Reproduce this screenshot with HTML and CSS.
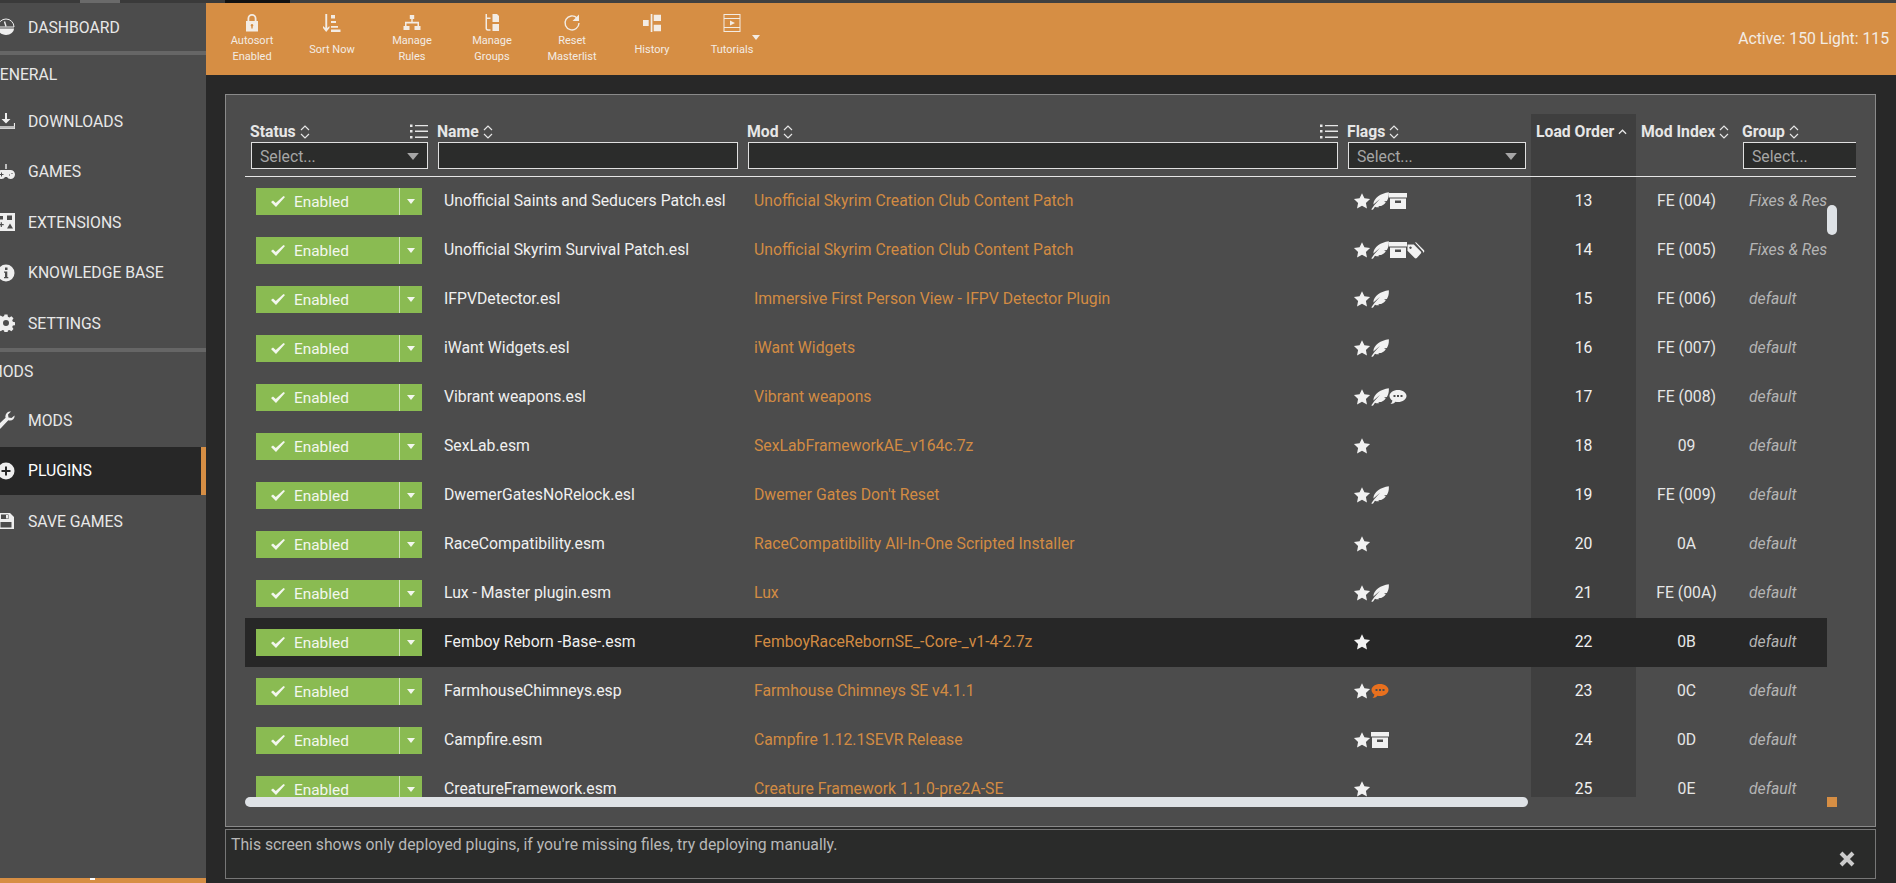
FILE: index.html
```html
<!DOCTYPE html>
<html lang="en">
<head>
    <meta charset="UTF-8">
    <meta name="viewport" content="width=device-width, initial-scale=1.0">
    <title>Plugins</title>
    <link rel="stylesheet" href="styles.css">
</head>
<body>
    <svg class="defs" width="0" height="0">
        <symbol id="star" viewBox="-.5 -.5 17 17"><path d="M8 .6l2.300 4.900 5.300.7-3.900 3.700 1 5.300L8 12.600l-4.700 2.600 1-5.300L.4 6.200l5.300-.7z"/></symbol>
        <symbol id="feather" viewBox="0 0 18 18"><path d="M17.800 .2c.3 3.200-.3 6.300-1.900 8.800l-3 .4 1.900.9c-1.100 1.700-2.700 3-4.700 3.700l-3.100-.1 1.500 1c-1.600.5-3.200.4-4.500-.2L1.900 17.800.2 17.400l3.200-4.300 5.700-6.400-6.700 5.700C2.400 5.800 10 1.200 17.800 .2z"/></symbol>
        <symbol id="box" viewBox="0 0 18 18"><path d="M0 1h18v4.500H0zM1 6.500h16V17H1zM6 8.500V11h6V8.500z" fill-rule="evenodd"/></symbol>
        <symbol id="tags" viewBox="0 0 18 18"><path d="M.5 3.500h6.300l7 7c.6.6.6 1.500 0 2.100l-4 4.400c-.6.6-1.500.6-2.100 0l-7.200-7.200zM3.500 5.500a1.200 1.200 0 1 0 .01 0z" fill-rule="evenodd"/><path d="M8 1.500l1-.3 7.800 7.800c.7.7.7 1.600 0 2.300l-.7.700c.3-.7.200-1.300-.3-1.800z"/></symbol>
        <symbol id="talk" viewBox="0 0 18 18"><path d="M9 2c4.700 0 8.500 2.700 8.500 6S13.700 14 9 14c-.9 0-1.700-.1-2.500-.3C5.200 15 3.500 16 1.500 16c1-.9 1.700-2 1.900-3.400C1.700 11.500.5 9.800.5 8 .5 4.700 4.300 2 9 2zM4.500 7v2h2V7zM8 7v2h2V7zM11.500 7v2h2V7z" fill-rule="evenodd"/></symbol>
        <symbol id="check" viewBox="0 0 14 11"><path d="M0 6l2-1.400 2.800 2.400L12.500 0 14 1 5 11z"/></symbol>
        <symbol id="caret" viewBox="0 0 10 6"><path d="M0 0h10L5 6z"/></symbol>
        <symbol id="updown" viewBox="0 0 10 14"><path d="M1 5l4-4 4 4M1 9l4 4 4-4" fill="none" stroke="currentColor" stroke-width="1.200"/></symbol>
        <symbol id="listicon" viewBox="0 0 18 15"><path d="M0 .5h2.500v2.500H0zM0 6h2.500v2.500H0zM0 12h2.500v2.500H0zM5 1h13v1.300H5zM5 6.600h13v1.300H5zM5 12.600h13v1.300H5z"/></symbol>
    </svg>

    <div class="topstrip"></div>

    <div class="app">
        <aside class="sidebar">
            <nav class="nav">
                <a class="nav-item nav-item--flush">
                    <svg class="nav-icon" viewBox="0 0 18 18"><path d="M9 1a8 8 0 0 1 8 8H1a8 8 0 0 1 8-8z" fill="none" stroke="#eee" stroke-width="1"/><path d="M1 10.500h16c0 3.500-3.500 6.500-8 6.500s-8-3-8-6.500z"/><path d="M9 8.500l-1.500-5" stroke="#eee" stroke-width="1.400"/></svg>
                    DASHBOARD
                </a>
                <div class="nav-rule"></div>
                <p class="nav-label">GENERAL</p>
                <a class="nav-item">
                    <svg class="nav-icon" viewBox="0 0 18 18"><path d="M8 1h2v6h3.500L9 11.500 4.500 7H8z"/><path d="M.5 11v5.500h17V11" fill="none" stroke="#eee" stroke-width="1.200"/><path d="M.5 14h17v2.500H.5z" fill="#bbb"/></svg>
                    DOWNLOADS
                </a>
                <a class="nav-item">
                    <svg class="nav-icon" viewBox="0 0 18 18"><path d="M8.300 1h1.400v5h-1.400z"/><path d="M4.500 7h9c2.500 0 4.500 2 4.500 4.500S16 16 13.500 16c-1.600 0-2.800-.9-3.500-2H8c-.7 1.100-1.900 2-3.500 2C2 16 0 14 0 11.500S2 7 4.500 7z"/><path d="M2.500 11h4v1h-4zM4 9.500h1v4H4zM12 11.500h1v1h-1zM14.500 10h1v1h-1z" fill="#4c4c4c"/></svg>
                    GAMES
                </a>
                <a class="nav-item">
                    <svg class="nav-icon" viewBox="0 0 18 18"><path d="M0 0h18v18H0zM2.500 3v3.500H6V3zM10 2.500V7h5V2.500zM2 11v1.200h1.700V14h1.200v-1.800h1.800V11H4.900V9.300H3.700V11zM10 15.500h6l-3-5z" fill-rule="evenodd"/></svg>
                    EXTENSIONS
                </a>
                <a class="nav-item">
                    <svg class="nav-icon" viewBox="0 0 18 18"><path d="M9 .5a8.500 8.500 0 1 1 0 17 8.500 8.500 0 0 1 0-17zM8 3.500v2.500h2.500V3.500zM7 7.500v1.200h1V13H7v1.300h4.300V13h-1V7.500z" fill-rule="evenodd"/></svg>
                    KNOWLEDGE BASE
                </a>
                <a class="nav-item nav-item--last">
                    <svg class="nav-icon" viewBox="0 0 18 18"><path d="M7.500 .5h3l.4 2.300 1.500.7 2-1.300 2.100 2.100-1.300 2 .7 1.500 2.300.4v3l-2.300.4-.7 1.500 1.300 2-2.100 2.100-2-1.300-1.500.7-.4 2.300h-3l-.4-2.300-1.500-.7-2 1.300L.5 14.300l1.300-2-.7-1.500L-.2 10.500v-3l2.300-.4.7-1.500-1.300-2L3.600 1.500l2 1.300 1.500-.7zM9 6a3 3 0 1 0 0 6 3 3 0 0 0 0-6z" fill-rule="evenodd"/></svg>
                    SETTINGS
                </a>
                <div class="nav-rule"></div>
                <p class="nav-label nav-label--mods">MODS</p>
                <a class="nav-item">
                    <svg class="nav-icon" viewBox="0 0 18 18"><path d="M17.500 4.500c.5 2.500-1.500 5-4.500 5-.6 0-1.200-.1-1.700-.3L4 17c-1 1-2.500 1-3.300.2-.9-.9-.8-2.200.2-3.200l7.700-7.300c-.2-.6-.3-1.200-.2-1.800C8.700 2 11.300 0 14 .5l-3 3 .5 3 3 .5z"/></svg>
                    MODS
                </a>
                <a class="nav-item nav-item--active">
                    <svg class="nav-icon" viewBox="0 0 18 18"><path d="M9 .5a8.500 8.500 0 1 1 0 17 8.500 8.500 0 0 1 0-17zM8 4.500V8H4.500v2H8v3.500h2V10h3.500V8H10V4.500z" fill-rule="evenodd"/></svg>
                    PLUGINS
                </a>
                <a class="nav-item">
                    <svg class="nav-icon" viewBox="0 0 18 18"><path d="M1 1h12l4 4v12H1zM4 2.500V7h7.500V2.500zM9 3h2v3.500H9zM3.500 10v5.500h11V10z" fill-rule="evenodd"/></svg>
                    SAVE GAMES
                </a>
            </nav>
            <div class="sidebar-foot"><span class="sidebar-mark"></span></div>
        </aside>

        <main class="main">
            <header class="toolbar">
                <div class="tool">
                    <svg class="tool-icon" viewBox="0 0 18 18"><path d="M9 0a4.500 4.500 0 0 1 4.500 4.500V7H15v10.500H3V7h1.500V4.500A4.500 4.500 0 0 1 9 0zM6.300 7h5.400V4.500a2.700 2.700 0 0 0-5.400 0zM9 10a1.300 1.300 0 0 0-.7 2.400v2h1.400v-2A1.300 1.300 0 0 0 9 10z" fill-rule="evenodd"/></svg>
                    <span class="tool-label">Autosort<br>Enabled</span>
                </div>
                <div class="tool">
                    <svg class="tool-icon" viewBox="0 0 18 18"><path d="M2.300 0h1.900v14l2.300-2v2L3.200 18 0 14v-2l2.300 2zM8 1h4v3.500H8zM8 7h5v2H8zM8 12h7v1.700H8zM8 15.500h9.500V18H8z"/></svg>
                    <span class="tool-label tool-label--one">Sort Now</span>
                </div>
                <div class="tool">
                    <svg class="tool-icon" viewBox="0 0 18 18"><path d="M6.800 1h4.400v4H9.700v2.800H16V12h1.500v4h-6v-4h3V9.500h-11V12h3v4h-6v-4H2V7.800h6.300V5H6.800z"/></svg>
                    <span class="tool-label">Manage<br>Rules</span>
                </div>
                <div class="tool">
                    <svg class="tool-icon" viewBox="0 0 18 18"><path d="M2.500 0h1.500v3.500h3.500V5H4v9c0 .8.300 1.200 1 1.200h2.500v1.500H4.800c-1.500 0-2.300-.9-2.300-2.500z"/><path d="M9.500 0h4.500l2 2v6H9.500zM9.500 10H16v7H9.500z"/></svg>
                    <span class="tool-label">Manage<br>Groups</span>
                </div>
                <div class="tool">
                    <svg class="tool-icon" viewBox="0 0 18 18"><path d="M14 4A7 7 0 1 0 16 9" fill="none" stroke="#f3ece4" stroke-width="1.400"/><path d="M16 .5v6.500H9.500z"/></svg>
                    <span class="tool-label">Reset<br>Masterlist</span>
                </div>
                <div class="tool">
                    <svg class="tool-icon" viewBox="0 0 18 18"><path d="M0 6h5.700v6H0zM7.700 0h1.700v18H7.700zM10.700 .7H18v6.200h-7.300zM10.700 10.800H18v6.500h-7.300z"/></svg>
                    <span class="tool-label tool-label--one">History</span>
                </div>
                <div class="tool">
                    <svg class="tool-icon" viewBox="0 0 18 18"><path d="M.5 0h17v18H.5zM1.500 4h15V1h-15zM1.500 14v3h15v-3zM1.500 5v8h15V5zM7 6.500l5 2.500-5 2.500z" fill-rule="evenodd"/><path d="M2 2.500h14M2 15.500h14" stroke="#d68e44" stroke-width="3" stroke-dasharray="1 2" fill="none"/></svg>
                    <span class="tool-label tool-label--one">Tutorials</span>
                    <svg class="tool-caret"><use href="#caret"/></svg>
                </div>
                <p class="counts">Active: 150 Light: 115</p>
            </header>

            <div class="content">
                <section class="panel">
                    <div class="cols head">
                        <div class="th">
                            <div class="th-title">Status <svg class="sort"><use href="#updown"/></svg><svg class="list"><use href="#listicon"/></svg></div>
                            <div class="filter"><span>Select...</span><svg class="filter-caret"><use href="#caret"/></svg></div>
                        </div>
                        <div class="th">
                            <div class="th-title">Name <svg class="sort"><use href="#updown"/></svg></div>
                            <div class="filter"></div>
                        </div>
                        <div class="th">
                            <div class="th-title">Mod <svg class="sort"><use href="#updown"/></svg><svg class="list"><use href="#listicon"/></svg></div>
                            <div class="filter"></div>
                        </div>
                        <div class="th th--flags">
                            <div class="th-title">Flags <svg class="sort"><use href="#updown"/></svg></div>
                            <div class="filter"><span>Select...</span><svg class="filter-caret"><use href="#caret"/></svg></div>
                        </div>
                        <div class="th th--sorted">
                            <div class="th-title">Load Order <svg class="sort-up" viewBox="0 0 10 6"><path d="M1 5l4-4 4 4" fill="none" stroke="currentColor" stroke-width="1.400"/></svg></div>
                        </div>
                        <div class="th">
                            <div class="th-title">Mod Index <svg class="sort"><use href="#updown"/></svg></div>
                        </div>
                        <div class="th">
                            <div class="th-title">Group <svg class="sort"><use href="#updown"/></svg></div>
                            <div class="filter filter--cut"><span>Select...</span></div>
                        </div>
                    </div>

                    <div class="body-wrap">
                        <div class="rows" id="rows"></div>
                        <div class="vbar"><div class="vthumb"></div></div>
                    </div>
                    <div class="hbar-wrap">
                        <div class="hbar"><div class="hthumb"></div></div>
                        <div class="corner"></div>
                    </div>
                </section>

                <section class="notice">
                    <p>This screen shows only deployed plugins, if you're missing files, try deploying manually.</p>
                    <svg class="close" viewBox="0 0 16 16"><path d="M2 2l12 12M14 2L2 14" stroke="#ccc" stroke-width="4" fill="none"/></svg>
                </section>
            </div>
        </main>
    </div>

    <script>
        const plugins = [
            ["Unofficial Saints and Seducers Patch.esl", "Unofficial Skyrim Creation Club Content Patch", ["star", "feather", "box"], "13", "FE (004)", "Fixes & Resources"],
            ["Unofficial Skyrim Survival Patch.esl", "Unofficial Skyrim Creation Club Content Patch", ["star", "feather", "box", "tags"], "14", "FE (005)", "Fixes & Resources"],
            ["IFPVDetector.esl", "Immersive First Person View - IFPV Detector Plugin", ["star", "feather"], "15", "FE (006)", "default"],
            ["iWant Widgets.esl", "iWant Widgets", ["star", "feather"], "16", "FE (007)", "default"],
            ["Vibrant weapons.esl", "Vibrant weapons", ["star", "feather", "talk"], "17", "FE (008)", "default"],
            ["SexLab.esm", "SexLabFrameworkAE_v164c.7z", ["star"], "18", "09", "default"],
            ["DwemerGatesNoRelock.esl", "Dwemer Gates Don't Reset", ["star", "feather"], "19", "FE (009)", "default"],
            ["RaceCompatibility.esm", "RaceCompatibility All-In-One Scripted Installer", ["star"], "20", "0A", "default"],
            ["Lux - Master plugin.esm", "Lux", ["star", "feather"], "21", "FE (00A)", "default"],
            ["Femboy Reborn -Base-.esm", "FemboyRaceRebornSE_-Core-_v1-4-2.7z", ["star"], "22", "0B", "default"],
            ["FarmhouseChimneys.esp", "Farmhouse Chimneys SE v4.1.1", ["star", "talk-warn"], "23", "0C", "default"],
            ["Campfire.esm", "Campfire 1.12.1SEVR Release", ["star", "box"], "24", "0D", "default"],
            ["CreatureFramework.esm", "Creature Framework 1.1.0-pre2A-SE", ["star"], "25", "0E", "default"]
        ];

        const flagIcon = (flag) => {
            const warn = flag === "talk-warn";
            const id = warn ? "talk" : flag;
            return `<svg class="flag${warn ? " flag--warn" : ""}"><use href="#${id}"/></svg>`;
        };

        document.querySelector("#rows").innerHTML = plugins.map((p) => `
            <div class="cols row${p[3] === "22" ? " row--hover" : ""}">
                <div class="td td--status">
                    <div class="status">
                        <span class="status-main"><svg class="status-check"><use href="#check"/></svg>Enabled</span>
                        <span class="status-more"><svg class="status-caret"><use href="#caret"/></svg></span>
                    </div>
                </div>
                <div class="td td--name">${p[0]}</div>
                <div class="td td--mod">${p[1]}</div>
                <div class="td td--flags">${p[2].map(flagIcon).join("")}</div>
                <div class="td td--order">${p[3]}</div>
                <div class="td td--index">${p[4]}</div>
                <div class="td td--group">${p[5].replace("&", "&amp;")}</div>
            </div>`).join("");
    </script>
</body>
</html>
```
FILE: styles.css
```css
html, body {
    margin: 0;
    height: 100%;
    overflow: hidden;
}

body {
    display: flex;
    flex-direction: column;
    background: #282828;
    color: #eee;
    font-family: Roboto, "Liberation Sans", sans-serif;
    font-size: 15.75px;
}

p {
    margin: 0;
}

.defs {
    display: block;
    height: 0;
}

svg {
    fill: currentColor;
}

.topstrip {
    height: 3px;
    flex: none;
    background: linear-gradient(to right, #3a3a3a 0 80px, #6a6a6a 80px 120px, #3a3a3a 120px 225px, #111 225px 290px, #404040 290px);
}

.app {
    flex: 1;
    min-height: 0;
    display: grid;
    grid-template-columns: 206px 1fr;
}

/* sidebar */
.sidebar {
    display: flex;
    flex-direction: column;
    background: #4c4c4c;
    overflow: hidden;
}

.nav {
    flex: 1;
    margin-left: -9px;
}

.nav-item {
    height: 48px;
    margin-bottom: 2.5px;
    padding-left: 6px;
    display: flex;
    align-items: center;
    gap: 13px;
    color: #e8e8e8;
}

.nav-item--flush {
    margin-bottom: 0;
}

.nav-item--last {
    margin-bottom: 1px;
}

.nav-item--active {
    background: #272727;
    color: #fff;
    border-right: 5px solid #d68e44;
}

.nav-icon {
    width: 18px;
    height: 18px;
    flex: none;
    fill: #eee;
}

.nav-rule {
    height: 4px;
    background: #666;
    margin-left: 9px;
}

.nav-label {
    height: 42px;
    line-height: 40px;
    margin-left: -2px;
    color: #e8e8e8;
}

.nav-label--mods {
    height: 44px;
}

.sidebar-foot {
    height: 5px;
    flex: none;
    background: #d68e44;
    padding-left: 90px;
}

.sidebar-mark {
    display: block;
    width: 5px;
    height: 2px;
    background: #fff;
}

/* toolbar */
.main {
    display: flex;
    flex-direction: column;
    min-width: 0;
}

.toolbar {
    height: 72px;
    flex: none;
    display: flex;
    padding-left: 6px;
    padding-right: 7px;
    background: #d68e44;
    color: #f3ece4;
}

.tool {
    width: 80px;
    display: flex;
    flex-direction: column;
    align-items: center;
    padding-top: 11px;
    font-size: 11px;
    line-height: 16px;
    position: relative;
}

.tool-icon {
    width: 18px;
    height: 18px;
    flex: none;
}

.tool-label {
    flex: 1;
    display: flex;
    align-items: center;
    text-align: center;
    padding-bottom: 11px;
    margin-top: 1px;
}

.tool-label--one {
    padding-bottom: 8px;
}

.tool-caret {
    position: absolute;
    left: 60px;
    top: 32px;
    width: 8px;
    height: 5px;
}

.counts {
    margin-left: auto;
    align-self: center;
    padding-bottom: 1px;
}

/* panel */
.content {
    flex: 1;
    min-height: 0;
    display: flex;
    flex-direction: column;
    gap: 2px;
    padding: 19px 20px 4px 19px;
}

.panel {
    height: 733px;
    flex: none;
    box-sizing: border-box;
    padding: 19px 0 0 19px;
    background: #4c4c4c;
    border: 1px solid #8a8a8a;
    overflow: hidden;
}

.cols {
    display: grid;
    grid-template-columns: 187px 310px 600px 189px 105px 101px 120px;
}

.head {
    width: 1611px;
    height: 63px;
    box-sizing: border-box;
    border-bottom: 1px solid #e6e6e6;
    overflow: hidden;
}

.th {
    padding: 7px 0 0 6px;
    min-width: 0;
}

.th--flags .filter {
    margin-right: 5px;
}

.th--sorted {
    background: #3f3f3f;
}

.th-title {
    height: 21px;
    margin-left: -1px;
    display: flex;
    align-items: center;
    gap: 4px;
    font-weight: 700;
    color: #e6e6e6;
    white-space: nowrap;
}

.sort {
    width: 10px;
    height: 14px;
}

.sort-up {
    width: 9px;
    height: 6px;
}

.list {
    width: 18px;
    height: 15px;
    margin-left: auto;
    margin-right: 4px;
}

.filter {
    height: 27px;
    margin-right: 4px;
    box-sizing: border-box;
    border: 1px solid #e0e0e0;
    background: #2b2c2b;
    color: #a6a6a6;
    display: flex;
    align-items: center;
    justify-content: space-between;
    padding: 1px 8px 0;
}

.filter--cut {
    margin-right: -10px;
    border-right: 0;
}

.filter-caret {
    width: 12px;
    height: 7px;
    fill: #a6a6a6;
}

.body-wrap {
    display: flex;
    height: 620px;
}

.rows {
    width: 1582px;
    overflow: hidden;
}

.row {
    height: 49px;
    width: 1612px;
}

.row--hover {
    background: #272727;
}

.td {
    padding-left: 12px;
    padding-bottom: 2px;
    display: flex;
    align-items: center;
    white-space: nowrap;
    overflow: hidden;
    min-width: 0;
}

.td--status {
    padding-left: 11px;
    padding-bottom: 0;
    font-size: 15.4px;
}

.td--name {
    color: #f0f0f0;
}

.td--mod {
    color: #d28b43;
}

.td--flags {
    padding-left: 11px;
}

.td--order {
    justify-content: center;
    padding-left: 0;
    background: #3f3f3f;
    color: #f0f0f0;
}

.row--hover .td--order {
    background: transparent;
}

.td--index {
    justify-content: center;
    padding-left: 0;
    color: #e6e6e6;
}

.td--group {
    font-style: italic;
    color: #b5b5b5;
}

.status {
    width: 166px;
    height: 27px;
    display: flex;
    background: #8abb52;
    color: #f3f7ee;
}

.status-main {
    width: 144px;
    display: flex;
    align-items: center;
    gap: 9px;
    padding-left: 15px;
    box-sizing: border-box;
    border-right: 1px solid #cfe2ba;
}

.status-check {
    width: 14px;
    height: 11px;
}

.status-more {
    flex: 1;
    display: flex;
    align-items: center;
    justify-content: center;
}

.status-caret {
    width: 8px;
    height: 5px;
}

.flag {
    width: 18px;
    height: 18px;
    flex: none;
    fill: #f2f2f2;
}

.flag--warn {
    fill: #e8701e;
}

.vbar {
    width: 10px;
    padding-top: 28px;
}

.vthumb {
    height: 30px;
    border-radius: 5px;
    background: #dee2e6;
}

.hbar-wrap {
    display: flex;
    height: 10px;
}

.hbar {
    width: 1582px;
}

.hthumb {
    width: 1283px;
    height: 10px;
    border-radius: 5px;
    background: #dee2e6;
}

.corner {
    width: 10px;
    height: 10px;
    background: #d68e44;
}

/* bottom message */
.notice {
    flex: 1;
    display: flex;
    justify-content: space-between;
    box-sizing: border-box;
    padding: 7px 0 0 5px;
    background: #2a2b2a;
    border: 1px solid #777;
    color: #b8b8b8;
    line-height: 16px;
}

.close {
    width: 16px;
    height: 16px;
    margin: 14px 20px 0 0;
}
```
